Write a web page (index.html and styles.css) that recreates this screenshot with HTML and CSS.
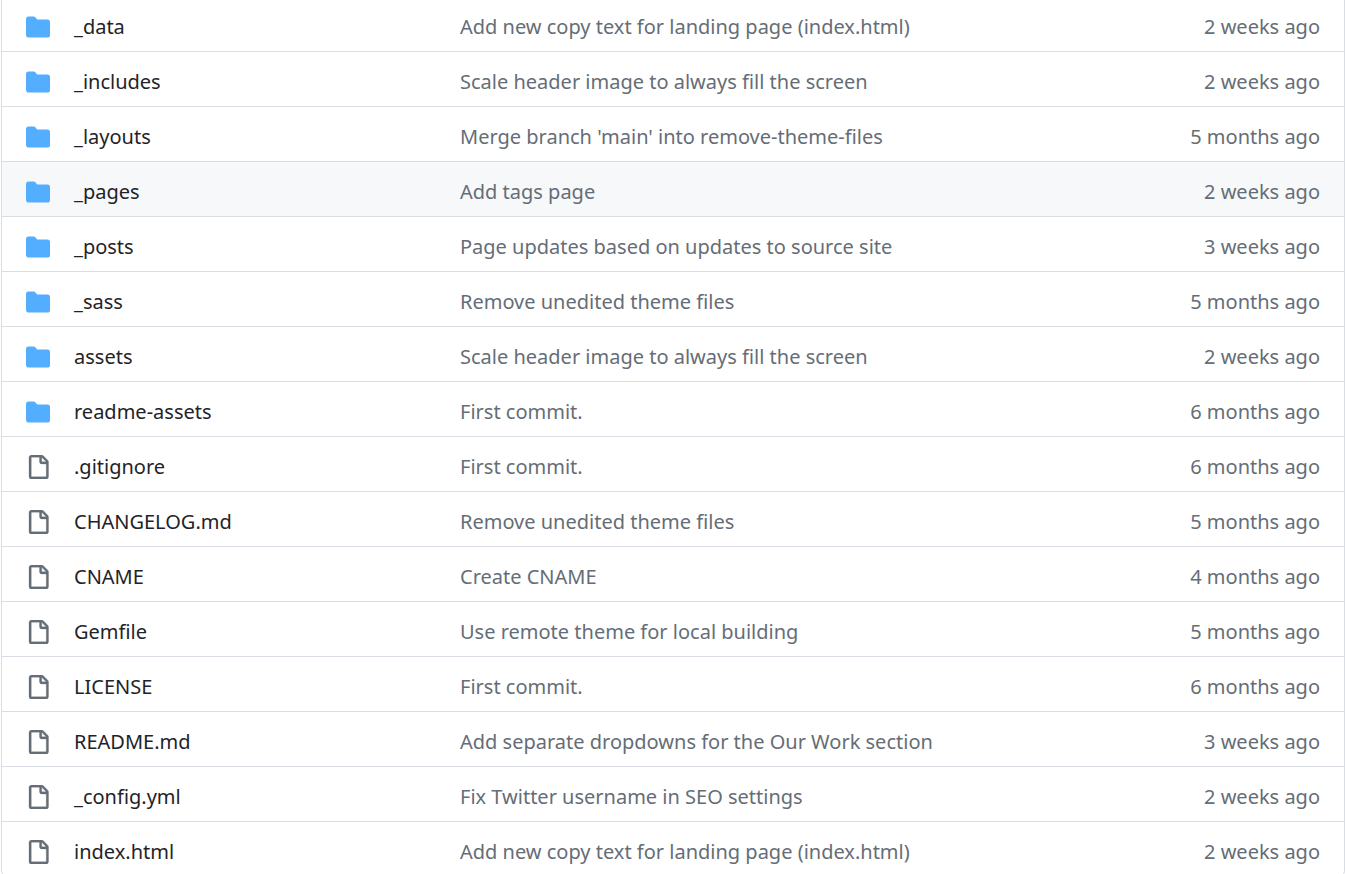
FILE: index.html
```
<!DOCTYPE html>
<html lang="en">
<head>
<meta charset="utf-8">
<title>Files</title>
<link rel="stylesheet" href="styles.css">
</head>
<body>
<svg class="sprite" aria-hidden="true">
<symbol id="folder" viewBox="0 0 16 16"><path d="M1.75 1A1.75 1.75 0 0 0 0 2.75v10.5C0 14.216.784 15 1.75 15h12.5A1.75 1.75 0 0 0 16 13.25v-8.5A1.75 1.75 0 0 0 14.25 3H7.5a.25.25 0 0 1-.2-.1l-.9-1.2C6.07 1.26 5.55 1 5 1H1.75Z"/></symbol>
<symbol id="file" viewBox="0 0 16 16"><path d="M2 1.75C2 .784 2.784 0 3.75 0h6.586c.464 0 .909.184 1.237.513l2.914 2.914c.329.328.513.773.513 1.237v9.586A1.75 1.75 0 0 1 13.25 16h-9.5A1.75 1.75 0 0 1 2 14.25Zm1.75-.25a.25.25 0 0 0-.25.25v12.5c0 .138.112.25.25.25h9.5a.25.25 0 0 0 .25-.25V6h-2.75A1.75 1.75 0 0 1 9 4.25V1.5Zm6.75.062V4.25c0 .138.112.25.25.25h2.688l-.011-.013-2.914-2.914-.013-.011Z"/></symbol>
</svg>
<table class="files">
<tbody>
<tr><td class="icon"><svg class="folder"><use href="#folder"/></svg></td><td class="name"><a href="#">_data</a></td><td class="message"><a href="#">Add new copy text for landing page (index.html)</a></td><td class="age">2 weeks ago</td></tr>
<tr><td class="icon"><svg class="folder"><use href="#folder"/></svg></td><td class="name"><a href="#">_includes</a></td><td class="message"><a href="#">Scale header image to always fill the screen</a></td><td class="age">2 weeks ago</td></tr>
<tr><td class="icon"><svg class="folder"><use href="#folder"/></svg></td><td class="name"><a href="#">_layouts</a></td><td class="message"><a href="#">Merge branch 'main' into remove-theme-files</a></td><td class="age">5 months ago</td></tr>
<tr class="active"><td class="icon"><svg class="folder"><use href="#folder"/></svg></td><td class="name"><a href="#">_pages</a></td><td class="message"><a href="#">Add tags page</a></td><td class="age">2 weeks ago</td></tr>
<tr><td class="icon"><svg class="folder"><use href="#folder"/></svg></td><td class="name"><a href="#">_posts</a></td><td class="message"><a href="#">Page updates based on updates to source site</a></td><td class="age">3 weeks ago</td></tr>
<tr><td class="icon"><svg class="folder"><use href="#folder"/></svg></td><td class="name"><a href="#">_sass</a></td><td class="message"><a href="#">Remove unedited theme files</a></td><td class="age">5 months ago</td></tr>
<tr><td class="icon"><svg class="folder"><use href="#folder"/></svg></td><td class="name"><a href="#">assets</a></td><td class="message"><a href="#">Scale header image to always fill the screen</a></td><td class="age">2 weeks ago</td></tr>
<tr><td class="icon"><svg class="folder"><use href="#folder"/></svg></td><td class="name"><a href="#">readme-assets</a></td><td class="message"><a href="#">First commit.</a></td><td class="age">6 months ago</td></tr>
<tr><td class="icon"><svg class="file"><use href="#file"/></svg></td><td class="name"><a href="#">.gitignore</a></td><td class="message"><a href="#">First commit.</a></td><td class="age">6 months ago</td></tr>
<tr><td class="icon"><svg class="file"><use href="#file"/></svg></td><td class="name"><a href="#">CHANGELOG.md</a></td><td class="message"><a href="#">Remove unedited theme files</a></td><td class="age">5 months ago</td></tr>
<tr><td class="icon"><svg class="file"><use href="#file"/></svg></td><td class="name"><a href="#">CNAME</a></td><td class="message"><a href="#">Create CNAME</a></td><td class="age">4 months ago</td></tr>
<tr><td class="icon"><svg class="file"><use href="#file"/></svg></td><td class="name"><a href="#">Gemfile</a></td><td class="message"><a href="#">Use remote theme for local building</a></td><td class="age">5 months ago</td></tr>
<tr><td class="icon"><svg class="file"><use href="#file"/></svg></td><td class="name"><a href="#">LICENSE</a></td><td class="message"><a href="#">First commit.</a></td><td class="age">6 months ago</td></tr>
<tr><td class="icon"><svg class="file"><use href="#file"/></svg></td><td class="name"><a href="#">README.md</a></td><td class="message"><a href="#">Add separate dropdowns for the Our Work section</a></td><td class="age">3 weeks ago</td></tr>
<tr><td class="icon"><svg class="file"><use href="#file"/></svg></td><td class="name"><a href="#">_config.yml</a></td><td class="message"><a href="#">Fix Twitter username in SEO settings</a></td><td class="age">2 weeks ago</td></tr>
<tr><td class="icon"><svg class="file"><use href="#file"/></svg></td><td class="name"><a href="#">index.html</a></td><td class="message"><a href="#">Add new copy text for landing page (index.html)</a></td><td class="age">2 weeks ago</td></tr>
</tbody>
</table>
</body>
</html>
```

FILE: styles.css
```
* { box-sizing: border-box; }
body {
  margin: 0;
  background: #fff;
  font: 20px/48px "Noto Sans", sans-serif;
  color: #1f2328;
}
.sprite { display: none; }
.files {
  width: calc(100% - 1px);
  margin-left: 1px;
  table-layout: fixed;
  border-collapse: separate;
  border-spacing: 0;
  border: solid #d8dee4;
  border-width: 0 1px 1px;
  border-radius: 0 0 6px 6px;
}
td {
  padding: 6px 0 0;
  border-top: 1px solid #d8dee4;
  white-space: nowrap;
}
tr:first-child td { padding-top: 3px; border-top: 0; }
.icon { width: 72px; padding-left: 24px; }
.name { width: 386px; }
.age { width: 200px; padding-right: 24px; text-align: right; color: #656d76; }
.active td { background: #f6f8fa; }
a { color: inherit; text-decoration: none; }
.message { color: #656d76; }
.icon svg { display: block; width: 24px; height: 24px; }
.folder { fill: #54aeff; }
.file { fill: #656d76; stroke: #656d76; stroke-width: 0.2; }
```
